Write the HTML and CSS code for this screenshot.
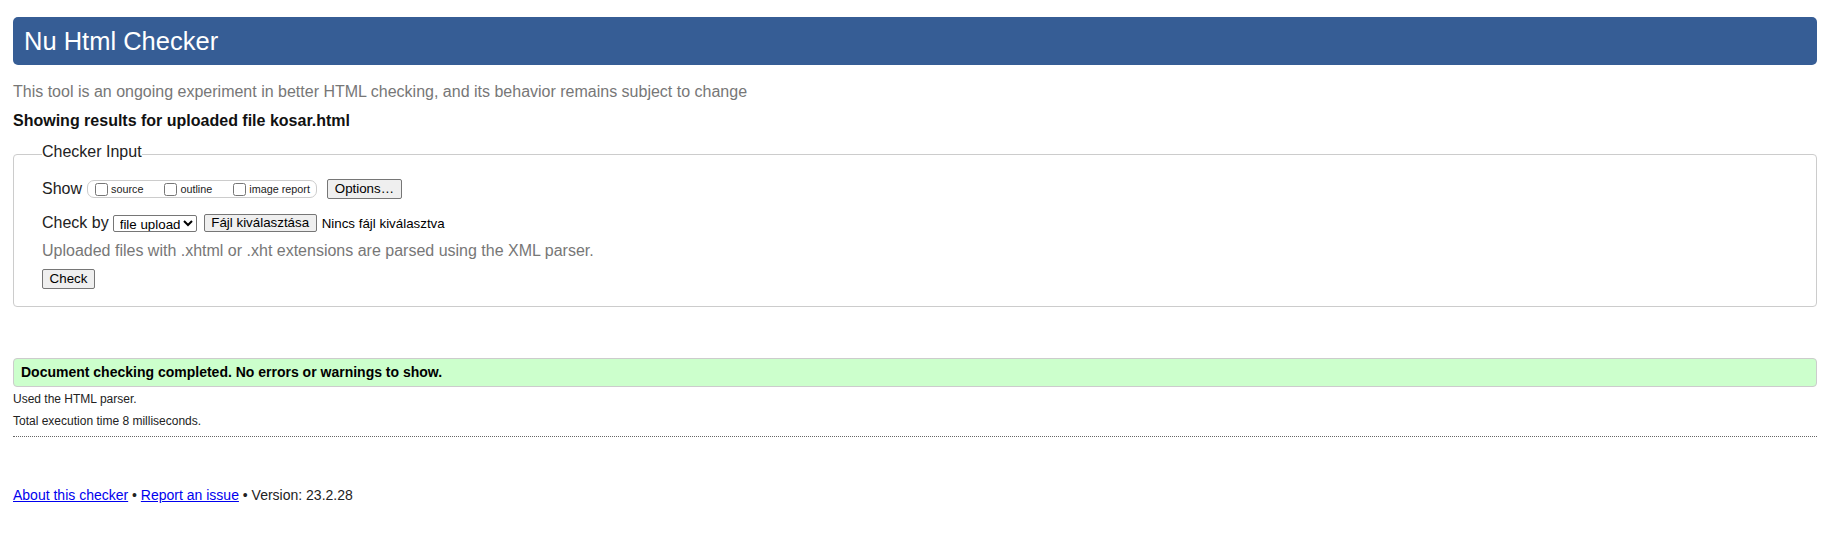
FILE: index.html
```html
<!DOCTYPE html>
<html lang="en">
<head>
<meta charset="utf-8">
<title>Showing results for kosar.html - Nu Html Checker</title>
<link rel="stylesheet" href="styles.css">
</head>
<body>
<div class="page">
  <h1 class="title">Nu Html Checker</h1>
  <p class="intro">This tool is an ongoing experiment in better HTML checking, and its behavior remains subject to change</p>
  <p class="showing">Showing results for uploaded file kosar.html</p>

  <fieldset class="checker">
    <legend class="checker-legend">Checker Input</legend>
    <div class="row row-show">
      <span class="row-label">Show</span>
      <span class="show-group">
        <label class="opt"><input type="checkbox" class="cb"><span>source</span></label>
        <label class="opt"><input type="checkbox" class="cb"><span>outline</span></label>
        <label class="opt opt-last"><input type="checkbox" class="cb"><span>image report</span></label>
      </span>
      <button type="button" class="btn btn-options">Options…</button>
    </div>
    <div class="row row-check">
      <span class="row-label">Check by</span>
      <select class="select">
        <option>file upload</option>
      </select>
      <button type="button" class="btn btn-file">Fájl kiválasztása</button>
      <span class="file-status">Nincs fájl kiválasztva</span>
    </div>
    <p class="hint">Uploaded files with .xhtml or .xht extensions are parsed using the XML parser.</p>
    <button type="button" class="btn btn-check">Check</button>
  </fieldset>

  <div class="success">Document checking completed. No errors or warnings to show.</div>
  <p class="meta meta-first">Used the HTML parser.</p>
  <p class="meta">Total execution time 8 milliseconds.</p>
  <hr class="divider">

  <p class="footer"><a href="#" class="link">About this checker</a> • <a href="#" class="link">Report an issue</a> • Version: 23.2.28</p>
</div>
</body>
</html>
```
FILE: styles.css
```css
html, body {
  margin: 0;
  padding: 0;
  background: #fff;
}

body {
  font-family: "Liberation Sans", Arial, sans-serif;
  font-size: 16px;
  color: #222;
}

.page {
  margin: 17px 31px 0 13px;
}

.title {
  margin: 0;
  height: 48px;
  line-height: 48px;
  padding: 0 11px;
  background: #365d95;
  color: #fff;
  font-size: 25.5px;
  font-weight: normal;
  border-radius: 5px;
}

.intro {
  margin: 17.5px 0 0;
  line-height: 18px;
  color: #777;
}

.showing {
  margin: 11.5px 0 0;
  line-height: 18px;
  font-weight: bold;
  color: #111;
}

.checker {
  margin: 13px 0 0;
  padding: 0 20px 17px 28px;
  border: 1px solid #ccc;
  border-radius: 4px;
  min-width: 0;
}

.checker-legend {
  padding: 0 0 4px;
  line-height: 18px;
  color: #222;
}

.row {
  display: flex;
  align-items: center;
}

.row-show {
  margin-top: 14px;
  height: 20px;
}

.row-check {
  margin-top: 15px;
  height: 18px;
}

.row-label {
  line-height: 18px;
}

.show-group {
  display: inline-flex;
  align-items: center;
  height: 16px;
  margin-left: 5px;
  padding: 0 6px 0 6px;
  border: 1px solid #ccc;
  border-radius: 7px;
  font-size: 10.8px;
}

.opt {
  display: inline-flex;
  align-items: center;
  margin-right: 20px;
}

.opt-last {
  margin-right: 0;
}

.cb {
  width: 13px;
  height: 13px;
  margin: 0 3px 0 1px;
}

.btn {
  font-family: "Liberation Sans", Arial, sans-serif;
  font-size: 13.33px;
  color: #000;
  background: #efefef;
  border: 1px solid #767676;
  border-radius: 2px;
  padding: 1px 7px;
  height: 20px;
  line-height: 16px;
}

.btn-options {
  margin-left: 10px;
  width: 75px;
  padding: 1px 0;
}

.select {
  font-family: "Liberation Sans", Arial, sans-serif;
  font-size: 13.33px;
  height: 17px;
  width: 84px;
  margin-left: 4px;
  padding: 0 0 0 2px;
  border: 1px solid #767676;
  border-radius: 2px;
  background: #fff;
  color: #000;
}

.btn-file {
  margin-left: 7px;
  width: 113px;
  height: 18px;
  line-height: 14px;
  padding: 1px 0;
}

.file-status {
  margin-left: 5px;
  font-size: 13.33px;
  color: #000;
}

.hint {
  margin: 10px 0 0;
  line-height: 18px;
  color: #777;
}

.btn-check {
  display: block;
  margin-top: 9px;
  width: 53px;
  padding: 1px 0;
}

.success {
  margin-top: 51px;
  height: 27px;
  line-height: 27px;
  padding: 0 7px;
  background: #ccffcc;
  border: 1px solid #ccc;
  border-radius: 4px;
  font-size: 14px;
  font-weight: bold;
  color: #000;
}

.meta {
  margin: 8.2px 0 0;
  font-size: 12px;
  line-height: 14px;
  color: #222;
}

.meta-first {
  margin-top: 5px;
}

.divider {
  margin: 8px 0 0;
  height: 0;
  border: 0;
  border-top: 1px dotted #666;
}

.footer {
  margin: 49.8px 0 0;
  font-size: 14px;
  line-height: 16px;
  color: #222;
}

.link {
  color: #0000ee;
  text-decoration: underline;
}
```
